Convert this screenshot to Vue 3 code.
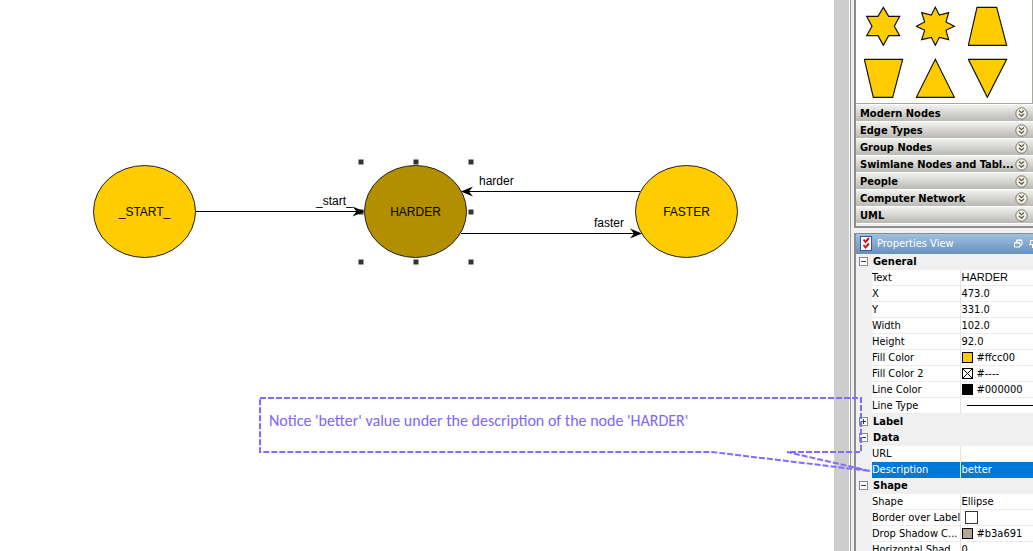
<script setup>
import { ref } from 'vue'

const shapes = [
  { name: 'Six-pointed star', points: '58,4 74,31 107,31 91,61 107,89 74,89 58,118 42,89 8,89 24,61 8,31 42,31' },
  { name: 'Eight-pointed star', points: '58,4 70,27 98,20 90,48 115,61 90,73 98,101 70,94 58,118 46,94 17,101 26,73 1,61 26,48 17,20 46,27' },
  { name: 'Trapezoid', points: '27,4 86,4 116,118 1,118' },
  { name: 'Inverted trapezoid', points: '1,4 116,4 86,118 28,118' },
  { name: 'Triangle', points: '58,4 115,118 1,118' },
  { name: 'Inverted triangle', points: '1,4 116,4 58,118' }
]

const groups = ['Modern Nodes', 'Edge Types', 'Group Nodes', 'Swimlane Nodes and Tabl...', 'People', 'Computer Network', 'UML']

const nodes = [
  { label: '_START_', x: 144.5, selected: false },
  { label: 'HARDER', x: 415.5, selected: true },
  { label: 'FASTER', x: 686.5, selected: false }
]

const handles = []
for (const x of [361, 416, 471]) {
  for (const y of [162, 212, 262]) {
    if (x !== 416 || y !== 212) handles.push({ x, y })
  }
}

const sections = ref([
  {
    title: 'General', open: true, rows: [
      { name: 'Text', value: 'HARDER', face: 'arial' },
      { name: 'X', value: '473.0' },
      { name: 'Y', value: '331.0' },
      { name: 'Width', value: '102.0' },
      { name: 'Height', value: '92.0' },
      { name: 'Fill Color', value: '#ffcc00', swatch: 'gold' },
      { name: 'Fill Color 2', value: '#----', swatch: 'none' },
      { name: 'Line Color', value: '#000000', swatch: 'black' },
      { name: 'Line Type', line: true }
    ]
  },
  { title: 'Label', open: false, rows: [] },
  {
    title: 'Data', open: true, rows: [
      { name: 'URL', value: '' },
      { name: 'Description', value: 'better', selected: true }
    ]
  },
  {
    title: 'Shape', open: true, rows: [
      { name: 'Shape', value: 'Ellipse' },
      { name: 'Border over Label', check: true },
      { name: 'Drop Shadow C...', value: '#b3a691', swatch: 'taupe' },
      { name: 'Horizontal Shad...', value: '0' }
    ]
  }
])
</script>

<template>
  <div class="editor">
    <main class="canvas">
      <svg class="graph" role="img" aria-label="State graph">
        <g v-for="n in nodes" :key="n.label">
          <ellipse :class="['node', { picked: n.selected }]" :cx="n.x" cy="211.5" rx="51" ry="46" />
          <text class="node-text" :x="n.x" y="216">{{ n.label }}</text>
        </g>
        <g class="edge">
          <path d="M196 211.5H360" />
          <path d="M640 191.5H466" />
          <path d="M461 233.5H637" />
        </g>
        <rect v-for="h in handles" :key="h.x + '-' + h.y" class="handle" :x="h.x - 2.5" :y="h.y - 2.5" width="5" height="5" />
        <path class="head" d="M364.500 211.500l-12-5 4 5-4 5z" />
        <path class="head" d="M461 191.500l12-5-4 5 4 5z" />
        <path class="head" d="M642 233.500l-12-5 4 5-4 5z" />
        <text x="316" y="205">_start_</text>
        <text x="479" y="185">harder</text>
        <text x="594" y="227">faster</text>
      </svg>
    </main>
    <div class="track"></div>
    <aside class="side">
      <section class="palette">
        <div class="shapes">
          <button v-for="s in shapes" :key="s.name" class="shape" :aria-label="s.name">
            <svg viewBox="0 0 120 120"><polygon :points="s.points" /></svg>
          </button>
        </div>
        <button v-for="g in groups" :key="g" class="group">
          <span>{{ g }}</span>
          <svg viewBox="0 0 13 13" aria-hidden="true">
            <circle cx="6.500" cy="6.500" r="5.700" />
            <path d="M4 3.500l2.500 2.300L9 3.500M4 7l2.500 2.300L9 7" />
          </svg>
        </button>
        <div class="palette-end"></div>
      </section>
      <section class="props">
        <header class="title">
          <svg class="sheet" viewBox="0 0 13 15" aria-hidden="true">
            <rect x="0.500" y="0.500" width="11" height="14" />
            <path d="M3.500 3.500l2 2.500L9 2M3.500 9l2 2.500L9 7.500" />
          </svg>
          <h2>Properties View</h2>
          <button aria-label="Float">
            <svg viewBox="0 0 9 9"><path d="M2.500 3V1.500H8V6H6.500M2.500 1H8M.5 3.500H6V8H.5zM.5 4H6" /></svg>
          </button>
          <button aria-label="Pin">
            <svg viewBox="0 0 9 9"><path d="M2 1.500H8M2.500 1V5M6.500 1V5M1 5.500H8M4.500 6V9" /></svg>
          </button>
        </header>
        <table class="sheet-table">
          <colgroup><col class="c-gutter"><col class="c-name"><col></colgroup>
          <tbody v-for="s in sections" :key="s.title">
            <tr class="section">
              <td>
                <button class="toggle" :aria-label="s.title + ' section'" @click="s.open = !s.open">
                  <svg viewBox="0 0 9 9">
                    <rect x="0.500" y="0.500" width="8" height="8" />
                    <path :d="s.open ? 'M2 4.500H7' : 'M2 4.500H7M4.500 2V7'" />
                  </svg>
                </button>
              </td>
              <th colspan="2">{{ s.title }}</th>
            </tr>
            <template v-if="s.open">
              <tr v-for="r in s.rows" :key="r.name" :class="{ chosen: r.selected }">
                <td class="gutter"></td>
                <td class="name"><label v-if="r.check" for="border-over">{{ r.name }}</label><template v-else>{{ r.name }}</template></td>
                <td class="value">
                  <div :class="['cell', r.face]">
                    <svg v-if="r.swatch" :class="['swatch', r.swatch]" viewBox="0 0 11 11" aria-hidden="true">
                      <rect x="0.500" y="0.500" width="10" height="10" />
                      <path v-if="r.swatch === 'none'" d="M1 1l9 9M10 1l-9 9" />
                    </svg>
                    <span v-if="r.line" class="line"></span>
                    <input v-if="r.check" id="border-over" type="checkbox">
                    <span v-if="r.value">{{ r.value }}</span>
                  </div>
                </td>
              </tr>
            </template>
          </tbody>
        </table>
      </section>
    </aside>
    <div class="note">
      <svg aria-hidden="true"><path d="M1 1H602V55H528L611 74L453 55H1Z" /></svg>
      <p>Notice 'better' value under the description of the node 'HARDER'</p>
    </div>
  </div>
</template>

<style>
body { margin: 0; }
</style>

<style scoped>
.editor {
  position: relative;
  display: flex;
  height: 100vh;
  overflow: hidden;
  background: #fff;
  color: #000;
  font: 11px/15px "DejaVu Sans Condensed", "DejaVu Sans", sans-serif;
}
button { border: 0; padding: 0; margin: 0; background: none; font: inherit; color: inherit; }
svg { display: block; }
.canvas { flex: 1; min-width: 0; }
.graph { width: 100%; height: 100%; font: 12px "Liberation Sans", Arial, sans-serif; }
.node { fill: #fc0; stroke: #222; stroke-width: 1; }
.picked { fill: #b38f00; }
.node-text { text-anchor: middle; }
.edge { stroke: #000; }
.handle { fill: #333; }
.track { width: 15px; background: #cdcdcd; border-right: 1px solid #fff; }
.side {
  flex: none;
  width: 179px;
  display: flex;
  flex-direction: column;
  gap: 5px;
  padding-left: 3px;
  border-left: 1px solid #999;
  background: #f0f0f0;
}
.palette { border: solid #8c8e92; border-width: 0 0 2px 2px; background: #fff; }
.shapes {
  display: grid;
  grid-template-columns: repeat(3, 40px);
  gap: 12px;
  padding: 6px 0 5px 8px;
  border-right: 1px solid #aca899;
  border-bottom: 1px solid #aca899;
}
.shape svg { width: 40px; height: 40px; }
.shape polygon { fill: #fc0; stroke: #111; stroke-width: 3.5; }
.group {
  display: flex;
  align-items: center;
  justify-content: space-between;
  width: 100%;
  height: 17px;
  padding: 0 5px 0 4px;
  border-top: 1px solid #fff;
  background: linear-gradient(#f1f1ef, #b9b8b3);
  font-weight: bold;
  white-space: nowrap;
}
.group svg { width: 13px; height: 13px; flex: none; }
.group circle { fill: #f1efe2; stroke: #77756a; }
.group path { fill: none; stroke: #5c5a50; stroke-width: 1.2; }
.palette-end { height: 2px; background: #f0f0ee; border-top: 1px solid #fff; }
.props { flex: 1; border: solid #8c8e92; border-width: 1px 0 0 2px; }
.title {
  box-sizing: border-box;
  display: flex;
  align-items: center;
  height: 20px;
  padding: 0 0 2px 4px;
  overflow: hidden;
  background: linear-gradient(#a0c0e2, #678fbe);
  color: #fff;
}
.title h2 { flex: 1; margin: 0 0 0 4px; font: inherit; white-space: nowrap; }
.title button { width: 9px; flex: none; margin-right: 5px; }
.title button:last-child { margin-right: -4px; }
.title button svg { width: 9px; height: 9px; }
.title button path { fill: none; stroke: #fff; }
.title .sheet { width: 13px; height: 15px; }
.sheet rect { fill: #fff; stroke: #2d5f9e; }
.sheet path { fill: none; stroke: #d3161c; stroke-width: 2; }
.sheet-table { width: 100%; table-layout: fixed; border-collapse: collapse; }
.c-gutter { width: 16px; }
.c-name { width: 88px; }
.sheet-table tr { height: 16px; }
.sheet-table td, .sheet-table th { height: 15px; padding: 0; white-space: nowrap; overflow: hidden; }
.section { background: #f0f0f0; }
.sheet-table th { text-align: left; padding: 0 0 1px 1px; font-weight: bold; }
.toggle { display: block; margin: 0 0 2px 3px; }
.toggle svg { width: 9px; height: 9px; }
.toggle rect { fill: #fff; stroke: #8a8a8a; }
.toggle path { stroke: #2c3f7c; }
.sheet-table .name, .sheet-table .value { background: #fff; box-shadow: inset 0 -1px #ececec; padding-bottom: 1px; }
.sheet-table .value { border-left: 1px solid #e4e4e4; }
.sheet-table .chosen .name, .sheet-table .chosen .value { background: #0078d7; color: #fff; box-shadow: none; }
.cell { display: flex; align-items: center; height: 15px; padding-left: 1px; }
.arial { font-family: "Liberation Sans", Arial, sans-serif; }
.swatch { width: 11px; height: 11px; margin-right: 4px; }
.swatch rect { stroke: #000; }
.swatch path { stroke: #000; }
.gold rect { fill: #fc0; }
.none rect { fill: #fff; }
.black rect { fill: #000; }
.taupe rect { fill: #b3a691; }
.line { flex: 1; height: 1px; margin-left: 5px; background: #000; }
input { appearance: none; box-sizing: border-box; width: 13px; height: 13px; margin: 0 0 0 3px; border: 1px solid #333; background: #fff; }
.note { position: absolute; left: 259px; top: 397px; width: 612px; height: 76px; color: #8066f8; pointer-events: none; }
.note svg { position: absolute; inset: 0; width: 100%; height: 100%; overflow: visible; }
.note path { fill: none; stroke: #806bff; stroke-width: 2; stroke-dasharray: 6 2; }
.note p { margin: 0; padding: 14px 0 0 10px; font: 16px/20px Carlito, Lato, sans-serif; white-space: nowrap; }
</style>
